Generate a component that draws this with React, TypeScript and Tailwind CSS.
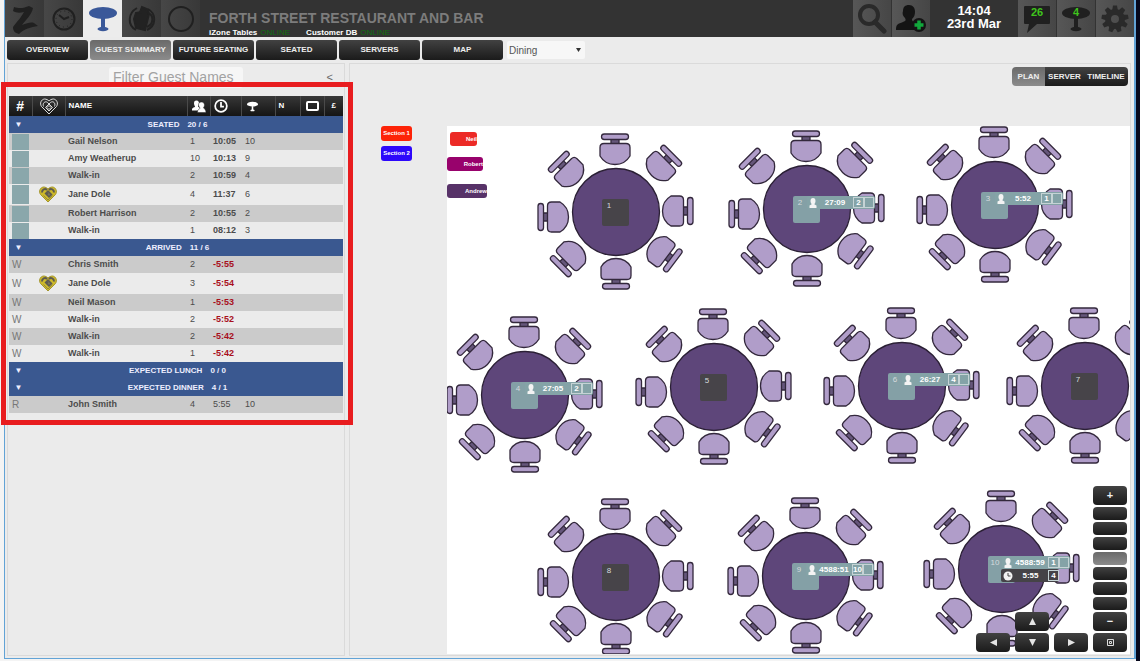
import { Fragment, type ReactNode } from "react";
import { clsx } from "clsx";

type Guest = {
  code?: string;
  vip?: boolean;
  name: string;
  covers: number;
  time: string;
  late?: boolean;
  plain?: boolean;
  table?: number;
};

type Group = { title: string; count: string; guests: Guest[] };

const groups: Group[] = [
  {
    title: "SEATED",
    count: "20 / 6",
    guests: [
      { name: "Gail Nelson", covers: 1, time: "10:05", table: 10 },
      { name: "Amy Weatherup", covers: 10, time: "10:13", table: 9 },
      { name: "Walk-in", covers: 2, time: "10:59", table: 4 },
      { name: "Jane Dole", covers: 4, time: "11:37", table: 6, vip: true },
      { name: "Robert Harrison", covers: 2, time: "10:55", table: 2 },
      { name: "Walk-in", covers: 1, time: "08:12", table: 3 },
    ],
  },
  {
    title: "ARRIVED",
    count: "11 / 6",
    guests: [
      { code: "W", name: "Chris Smith", covers: 2, time: "-5:55", late: true },
      { code: "W", name: "Jane Dole", covers: 3, time: "-5:54", late: true, vip: true },
      { code: "W", name: "Neil Mason", covers: 1, time: "-5:53", late: true },
      { code: "W", name: "Walk-in", covers: 2, time: "-5:52", late: true },
      { code: "W", name: "Walk-in", covers: 2, time: "-5:42", late: true },
      { code: "W", name: "Walk-in", covers: 1, time: "-5:42", late: true },
    ],
  },
  { title: "EXPECTED LUNCH", count: "0 / 0", guests: [] },
  {
    title: "EXPECTED DINNER",
    count: "4 / 1",
    guests: [{ code: "R", name: "John Smith", covers: 4, time: "5:55", table: 10, plain: true }],
  },
];

type Seating = { time: string; covers: number };
type FloorTable = { id: number; x: number; y: number; seated?: Seating; next?: Seating };

// Table centres on the floor plan
const floorTables: FloorTable[] = [
  { id: 1, x: 169, y: 86 },
  { id: 2, x: 360, y: 83, seated: { time: "27:09", covers: 2 } },
  { id: 3, x: 548, y: 79, seated: { time: "5:52", covers: 1 } },
  { id: 4, x: 78, y: 269, seated: { time: "27:05", covers: 2 } },
  { id: 5, x: 267, y: 261 },
  { id: 6, x: 455, y: 260, seated: { time: "26:27", covers: 4 } },
  { id: 7, x: 638, y: 260 },
  { id: 8, x: 169, y: 451 },
  { id: 9, x: 359, y: 450, seated: { time: "4588:51", covers: 10 } },
  {
    id: 10,
    x: 555,
    y: 443,
    seated: { time: "4588:59", covers: 1 },
    next: { time: "5:55", covers: 4 },
  },
];

const chairs = [
  { x: -1, y: -58, angle: 0 },
  { x: 43, y: -44, angle: 45 },
  { x: 57, y: -1, angle: 90 },
  { x: 43, y: 38, angle: 127 },
  { x: 0, y: 57, angle: 180 },
  { x: -43, y: 42, angle: 225 },
  { x: -58, y: 5, angle: 270 },
  { x: -45, y: -38, angle: 315 },
];

const servers = [
  { name: "Neil", className: "left-[3px] top-[6px] w-[27px] bg-[#ec2a26]" },
  { name: "Robert", className: "left-0 top-[31px] w-[36px] bg-[#98026c]" },
  { name: "Andrew", className: "left-0 top-[58px] w-[40px] bg-[#573268]" },
];

const navItems = ["OVERVIEW", "GUEST SUMMARY", "FUTURE SEATING", "SEATED", "SERVERS", "MAP"];
const dark = "bg-linear-to-b from-[#424242] to-[#1b1b1b] text-[#eee]";
const grey = "bg-linear-to-b from-[#6a6a6a] to-[#8b8b8b] text-[#eee]";

/* Icons */
const Logo = () => (
  <svg width="30" height="30" viewBox="0 0 30 30" fill="#202020">
    <path d="M4 3c6 2 10 1 15-1l4 2c-1 6-7 12-11 17 5-2 9-3 12-2l4 3c-7 1-14 3-19 8-4-1-6-3-6-7C7 18 12 12 14 8 10 9 6 9 3 7z" />
  </svg>
);

const ReservationsIcon = () => (
  <svg width="24" height="24" viewBox="0 0 24 24" fill="none" stroke="#202020">
    <circle cx="12" cy="12" r="10.500" strokeWidth="2" />
    <circle cx="12" cy="12" r="8" strokeDasharray="1 3.200" />
    <path d="M7 8l5 4 5-2" strokeWidth="2" />
  </svg>
);

const ClockIcon = () => (
  <svg className="mx-auto block" width="14" height="14" viewBox="0 0 24 24" fill="none" stroke="#fff" strokeWidth="3">
    <circle cx="12" cy="12" r="10" />
    <path d="M12 5v8h5" />
  </svg>
);

const TableIcon = ({ size, color }: { size: number; color: string }) => (
  <svg width={size} height={size} viewBox="0 0 28 28" fill={color}>
    <ellipse cx="14" cy="8" rx="14" ry="6" />
    <path d="M12 13h4v10h-4z" />
    <ellipse cx="14" cy="24" rx="5.500" ry="2.200" />
  </svg>
);

const FoodIcon = () => (
  <svg width="28" height="28" viewBox="0 0 28 28" fill="none" stroke="#222" strokeWidth="2">
    <path d="M9 3C0 8-1 20 8 25M20 4c9 5 8 17-1 21" />
    <path d="M8 8l12-2 1 3-4 16-9-2-2-9z" fill="#222" />
    <path d="M12 7l2-5 5 2-1 3z" fill="#222" />
    <path d="M20 8c6 2 6 11-1 14" />
  </svg>
);

const RingIcon = () => (
  <svg width="28" height="28" viewBox="0 0 28 28" fill="none" stroke="#202020" strokeWidth="2">
    <circle cx="14" cy="14" r="12" />
  </svg>
);

const SearchIcon = () => (
  <svg width="30" height="30" viewBox="0 0 30 30" fill="none" stroke="#2a2a2a">
    <circle cx="12" cy="11" r="9" strokeWidth="4" />
    <path d="M18 18l9 9" strokeWidth="5" strokeLinecap="round" />
  </svg>
);

const AddGuestIcon = () => (
  <svg width="32" height="30" viewBox="0 0 32 30">
    <path
      d="M14 1c4 0 6 3 6 7 0 3-1 5-3 7 0 2 1 3 5 4v7H1c0-6 2-6 7-8 3-1 3-2 2-4-2-2-3-4-2-7 0-4 2-6 6-6z"
      fill="#141414"
    />
    <circle cx="24" cy="21" r="7" fill="#141414" />
    <path d="M24 16.500v9M19.500 21h9" stroke="#12a83c" strokeWidth="3.500" />
  </svg>
);

const ChatIcon = () => (
  <svg width="28" height="28" viewBox="0 0 28 28" fill="#202020">
    <path d="M2 1h24q1 0 1 1v16q0 1-1 1H14l-10 9 2-9H2q-1 0-1-1V2q0-1 1-1z" />
  </svg>
);

const GearIcon = () => (
  <svg width="28" height="28" viewBox="-14 -14 28 28">
    <g fill="#2a2a2a">
      {[0, 40, 80, 120, 160, 200, 240, 280, 320].map((a) => (
        <path key={a} d="M-3-8L-2-13.500H2L3-8z" transform={`rotate(${a})`} />
      ))}
    </g>
    <circle r="7" fill="none" stroke="#2a2a2a" strokeWidth="6" />
  </svg>
);

const HeartIcon = ({ gold }: { gold?: boolean }) => (
  <svg className="mx-auto block" width="18" height="17" viewBox="0 0 36 34" fill="none">
    <path
      d="M18 32L3 17C-1 11 2 3 9 2c4 0 7 2 9 4 2-2 5-4 9-4 7 1 10 9 6 15z"
      fill={gold ? "#cdb92a" : "none"}
      stroke={gold ? "#a3952d" : "#ddd"}
      strokeWidth="2"
    />
    {gold ? (
      <g stroke="#5d5a50" strokeWidth="3">
        <path d="M6 13c0-6 6-9 10-5M20 8c4-4 10-1 10 5" strokeWidth="4" />
        <path d="M12 16l6-6 7 7-5 5-5-5 3-3" fill="#77735e" />
        <path d="M9 19l9 9 9-9" strokeWidth="1" />
      </g>
    ) : (
      <g stroke="#ddd" strokeWidth="2">
        <path d="M7 17C4 10 11 5 15 9l10 10-7 7-7-7 10-10c5-4 11 1 8 8" />
        <path d="M14 19l4-4 4 4-4 4z" />
      </g>
    )}
  </svg>
);

const PeopleIcon = () => (
  <svg className="mx-auto block" width="14" height="13" viewBox="0 0 28 26" fill="#fff">
    <path d="M9 1c4 0 5 3 5 6 0 2-1 4-2 5 0 2 3 3 4 4v5H0c0-5 1-5 6-7 0-2-2-4-2-7 0-4 1-6 5-6z" />
    <path
      d="M19 4c4 0 6 3 6 6 0 2-1 4-2 5 0 2 5 3 5 10H11c0-5 1-6 5-8 0-2-3-4-3-7 0-4 2-6 6-6z"
      stroke="#222"
    />
  </svg>
);

const PersonIcon = () => (
  <svg className="shrink-0" width="8" height="10" viewBox="0 0 16 20" fill="#f3f3f3">
    <ellipse cx="8" cy="6" rx="5" ry="6" />
    <path d="M5 10h6v3l4 2v5H1v-5l4-2z" />
  </svg>
);

/* Header */
const HeaderTile = ({
  label,
  active,
  left,
  children,
}: {
  label: string;
  active?: boolean;
  left?: boolean;
  children: ReactNode;
}) => (
  <button
    aria-label={label}
    className={clsx(
      "relative flex h-full shrink-0 items-center justify-center",
      left ? "w-[39px]" : "w-[38px]",
      active
        ? "bg-[#ececec]"
        : left
          ? "bg-linear-to-r from-[#474747] to-[#383838]"
          : "bg-linear-to-r from-[#575757] to-[#464646]",
    )}
  >
    {children}
  </button>
);

const Header = () => (
  <header className="flex h-[37px] bg-[#333]">
    <HeaderTile label="Home" left>
      <Logo />
    </HeaderTile>
    <HeaderTile label="Reservations" left>
      <ReservationsIcon />
    </HeaderTile>
    <HeaderTile label="Tables" left active>
      <TableIcon size={28} color="#3a5899" />
    </HeaderTile>
    <HeaderTile label="Menu" left>
      <FoodIcon />
    </HeaderTile>
    <HeaderTile label="Status" left>
      <RingIcon />
    </HeaderTile>

    <div className="ml-[9px] pt-2 whitespace-nowrap">
      <h1 className="text-[14px] leading-5 font-bold text-[#7c7c7c]">
        FORTH STREET RESTAURANT AND BAR
      </h1>
      <p className="flex gap-[3px] text-[8px] leading-[9px] text-[#107010]">
        <b className="text-white">iZone Tables</b>ONLINE
        <b className="ml-[13px] text-white">Customer DB</b>ONLINE
      </p>
    </div>

    <div className="ml-auto flex gap-px">
      <HeaderTile label="Search">
        <SearchIcon />
      </HeaderTile>
      <HeaderTile label="Add guest">
        <AddGuestIcon />
      </HeaderTile>
      <div className="w-[86px] pt-1 text-center text-[13px] leading-[13px] font-bold text-white">
        <p>14:04</p>
        <p>23rd Mar</p>
      </div>
      <HeaderTile label="Messages">
        <ChatIcon />
        <span className="absolute inset-x-0 top-[6px] text-[11px] leading-3 font-bold text-[#3fc41c]">
          26
        </span>
      </HeaderTile>
      <HeaderTile label="Ready tables">
        <TableIcon size={28} color="#202020" />
        <span className="absolute inset-x-0 top-[6px] text-[11px] leading-3 font-bold text-[#3fc41c]">
          4
        </span>
      </HeaderTile>
      <HeaderTile label="Settings">
        <GearIcon />
      </HeaderTile>
    </div>
  </header>
);

const Toolbar = () => (
  <nav className="flex h-[26px] items-center gap-[2px] pl-[2px]">
    {navItems.map((item) => (
      <button
        key={item}
        className={clsx(
          "h-5 w-[81px] rounded-[3px] text-[8px] font-bold",
          item === "GUEST SUMMARY" ? grey : dark,
        )}
      >
        {item}
      </button>
    ))}
    <div className="relative ml-[2px] flex items-center">
      <select
        aria-label="Area"
        className="h-[18px] w-[78px] appearance-none rounded-[2px] bg-[#f7f7f7] pl-[2px] text-[10px] text-[#555]"
      >
        <option>Dining</option>
      </select>
      <svg className="pointer-events-none absolute right-1" width="5" height="4" viewBox="0 0 5 4">
        <path d="M0 0h5L2.500 4z" fill="#333" />
      </svg>
    </div>
  </nav>
);

/* Guest list */
const th = "border-l border-[#4a4a4a] p-0";

const GuestTable = () => (
  <table className="w-full table-fixed border-collapse text-[9px] text-[#4c4c4c]">
    <colgroup>
      <col className="w-[23px]" />
      <col className="w-[33px]" />
      <col />
      <col className="w-[23px]" />
      <col className="w-[31px]" />
      <col className="w-[34px]" />
      <col className="w-[25px]" />
      <col className="w-[24px]" />
      <col className="w-[19px]" />
    </colgroup>
    <thead>
      <tr className="h-5 bg-linear-to-b from-[#383838] to-[#151515] text-[8px] text-white">
        <th className="p-0 text-[14px] leading-4">#</th>
        <th className={th} aria-label="Loyalty">
          <HeartIcon />
        </th>
        <th className={clsx(th, "pl-[3px] text-left")}>NAME</th>
        <th className={th} aria-label="Covers">
          <PeopleIcon />
        </th>
        <th className={clsx(th, "pr-[9px]")} aria-label="Time">
          <ClockIcon />
        </th>
        <th className={clsx(th, "pr-[12px] align-middle")} aria-label="Table">
          <span className="flex justify-center">
            <TableIcon size={11} color="#fff" />
          </span>
        </th>
        <th className={clsx(th, "pl-[3px] text-left")}>N</th>
        <th className={th} aria-label="Screen">
          <span className="mx-auto block h-[10px] w-[13px] rounded-[2px] border-2 border-white" />
        </th>
        <th className={th}>£</th>
      </tr>
    </thead>
    <tbody>
      {groups.map((group) => (
        <Fragment key={group.title}>
          <tr className="h-[17px] bg-[#3a5890] text-[#eef]">
            <td className="p-0 text-center">
              <button aria-label={`Toggle ${group.title}`} className="block w-full pr-1 text-[8px] leading-[17px]">
                ▼
              </button>
            </td>
            <td colSpan={8} className="p-0 pr-5 text-center text-[8px] leading-[17px] font-bold">
              <span className="mr-2">{group.title}</span>
              {group.count}
            </td>
          </tr>
          {group.guests.map((guest, i) => (
            <tr
              key={i}
              className={clsx(
                "leading-[17px]",
                guest.vip ? "h-[21px]" : "h-[17px]",
                i % 2 ? "bg-[#ebebeb]" : "bg-[#cbcbcb]",
              )}
            >
              <td className="p-0 pl-[3px] text-[10px] text-[#777]">
                {guest.code ?? (
                  <span
                    className={clsx("block w-[17px] bg-[#8aa7ab]", guest.vip ? "h-[19px]" : "h-4")}
                  />
                )}
              </td>
              <td className="p-0 pr-[2px]">{guest.vip && <HeartIcon gold />}</td>
              <td className="p-0 pl-[3px] font-bold">{guest.name}</td>
              <td className="p-0 pl-[3px]">{guest.covers}</td>
              <td
                className={clsx(
                  "p-0 pl-[3px]",
                  !guest.plain && "font-bold",
                  guest.late && "text-[#a80f1c]",
                )}
              >
                {guest.time}
              </td>
              <td className="p-0 pl-[4px]">{guest.table}</td>
              <td colSpan={3} />
            </tr>
          ))}
        </Fragment>
      ))}
    </tbody>
  </table>
);

const GuestPanel = () => (
  <section className="w-[338px] shrink-0 border border-[#dadada] px-px">
    <div className="relative mt-[3px] mb-2 flex h-[21px] justify-center">
      <input
        aria-label="Filter Guest Names"
        placeholder="Filter Guest Names"
        className="w-[134px] rounded-[3px] bg-[#f6f6f6] px-1 text-[14px] text-[#555] placeholder:text-[#a2a2a2]"
      />
      <button aria-label="Collapse" className="absolute top-0 right-[10px] text-[11px] leading-5 text-[#666]">
        &lt;
      </button>
    </div>
    <div className="relative">
      <GuestTable />
      <div className="pointer-events-none absolute -top-[14px] -right-[10px] -bottom-[12px] -left-2 z-10 border-[5px] border-[#e81c1f]" />
    </div>
  </section>
);

/* Floor plan */
const Chair = ({ x, y, angle }: { x: number; y: number; angle: number }) => (
  <g
    transform={`translate(${x} ${y}) rotate(${angle})`}
    fill="#b09dc9"
    stroke="#33283c"
    strokeWidth="1.300"
  >
    <path d="M-4-15h8v5h-8z" fill="#65567a" />
    <rect x="-13.500" y="-20" width="27" height="5.500" rx="2.750" />
    <path d="M-11-10.500H11Q15-10.500 15-6.500V2Q10 10.500 0 10.500T-15 2V-6.500Q-15-10.500-11-10.500z" />
  </g>
);

const SeatingStrip = ({ seating, next }: { seating: Seating; next?: boolean }) => (
  <div
    className={clsx(
      "flex h-[13px] shrink-0 items-center rounded-[2px] pl-[2px] text-[8px] font-bold text-white",
      next ? "ml-[13px] w-[58px] bg-[#454347]" : "w-[68px] bg-[#84a3a7]",
    )}
  >
    {next ? (
      <svg className="shrink-0" width="10" height="10" viewBox="0 0 20 20">
        <circle cx="10" cy="10" r="9" fill="#f3f3f3" />
        <path d="M10 4v6h5" fill="none" stroke="#444" strokeWidth="2" />
      </svg>
    ) : (
      <PersonIcon />
    )}
    <span className="flex-1 text-center leading-[13px]">{seating.time}</span>
    <span className="h-[11px] w-[11px] border border-[#c5d3d5] text-center leading-[9px]">
      {seating.covers}
    </span>
    {!next && <span className="mr-px h-[11px] w-[10px] border border-[#c5d3d5]" />}
  </div>
);

const PlanTable = ({ table }: { table: FloorTable }) => (
  <div className="absolute size-0" style={{ left: table.x, top: table.y }}>
    <svg className="absolute -top-20 -left-20" width="160" height="160" viewBox="-80 -80 160 160">
      {chairs.map((chair) => (
        <Chair key={chair.angle} {...chair} />
      ))}
      <circle r="43.500" fill="#5e467a" stroke="#2b2035" strokeWidth="1.300" />
    </svg>
    <div
      className={clsx(
        "absolute -top-[13px] -left-[14px] size-[27px] rounded-[2px]",
        table.seated ? "bg-[#84a0a6]" : "bg-[#474449]",
      )}
    >
      <div className="flex text-[8px] leading-[13px] text-[#d5dadd]">
        <span className="w-[14px] shrink-0 text-center">{table.id}</span>
        {table.seated && <SeatingStrip seating={table.seated} />}
      </div>
      {table.next && <SeatingStrip seating={table.next} next />}
    </div>
  </div>
);

const Key = ({ label, small, active, children }: {
  label: string;
  small?: boolean;
  active?: boolean;
  children?: ReactNode;
}) => (
  <button
    aria-label={label}
    className={clsx(
      "flex w-[34px] items-center justify-center rounded-[4px] text-[11px] leading-none font-bold",
      small ? "h-[13px]" : "h-[19px]",
      active ? grey : dark,
    )}
  >
    {children}
  </button>
);

const Arrow = ({ d }: { d: string }) => (
  <svg width="7" height="7" viewBox="0 0 7 7" fill="#e4e4e4">
    <path d={d} />
  </svg>
);

const MapControls = () => (
  <div className="absolute right-[3px] bottom-[2px] flex items-end gap-[5px]">
    <Key label="Pan left">
      <Arrow d="M7 0v7L0 3.500z" />
    </Key>
    <div className="flex flex-col gap-[2px]">
      <Key label="Pan up">
        <Arrow d="M0 7h7L3.500 0z" />
      </Key>
      <Key label="Pan down">
        <Arrow d="M0 0h7L3.500 7z" />
      </Key>
    </div>
    <Key label="Pan right">
      <Arrow d="M0 0v7l7-3.500z" />
    </Key>
    <div className="flex flex-col gap-[2px]">
      <Key label="Zoom in">+</Key>
      {[7, 6, 5, 4, 3, 2, 1].map((level) => (
        <Key key={level} label={`Zoom level ${level}`} small active={level === 4} />
      ))}
      <Key label="Zoom out">−</Key>
      <Key label="Fit to screen">
        <svg width="7" height="7" viewBox="0 0 7 7" fill="none" stroke="#ddd">
          <path d="M.5.5h6v6h-6zM2.500 2.500h2v2h-2z" />
        </svg>
      </Key>
    </div>
  </div>
);

const PlanPanel = () => (
  <section className="flex min-w-0 flex-1 flex-col border border-[#dadada] pb-px">
    <div className="mt-[3px] mr-[2px] flex h-[19px] self-end overflow-hidden rounded-[4px] text-[8px] font-bold">
      <button className={clsx("w-[33px]", grey)}>PLAN</button>
      <button className={clsx("w-[39px]", dark)}>SERVER</button>
      <button className={clsx("w-[44px]", dark)}>TIMELINE</button>
    </div>
    <div className="mt-10 flex flex-1 gap-[35px] pl-[31px]">
      <div className="flex w-[31px] shrink-0 flex-col gap-[5px] text-center text-[6px] leading-[15px] font-bold whitespace-nowrap text-white">
        <span className="rounded-[3px] bg-[#fd2308]">Section 1</span>
        <span className="rounded-[3px] bg-[#2c08fb]">Section 2</span>
      </div>
      <div className="relative flex-1 overflow-hidden bg-white">
        {servers.map((server) => (
          <span
            key={server.name}
            className={clsx(
              "absolute h-[14px] rounded-[3px] text-right text-[6px] leading-[14px] font-bold text-white",
              server.className,
            )}
          >
            {server.name}
          </span>
        ))}
        {floorTables.map((table) => (
          <PlanTable key={table.id} table={table} />
        ))}
        <MapControls />
      </div>
    </div>
  </section>
);

const App = () => (
  <div className="flex min-h-screen bg-[#f4f4f4] pl-1 font-['Liberation_Sans',Arial,sans-serif]">
    <main className="mb-[2px] flex min-w-0 flex-1 flex-col border-r-2 border-b border-l border-[#62a3d6] bg-[#ebebeb]">
      <Header />
      <Toolbar />
      <div className="flex flex-1 gap-1 pr-[3px] pb-[2px] pl-[2px]">
        <GuestPanel />
        <PlanPanel />
      </div>
    </main>
    <div className="w-1 bg-[#06081c]" />
  </div>
);

export default App;
